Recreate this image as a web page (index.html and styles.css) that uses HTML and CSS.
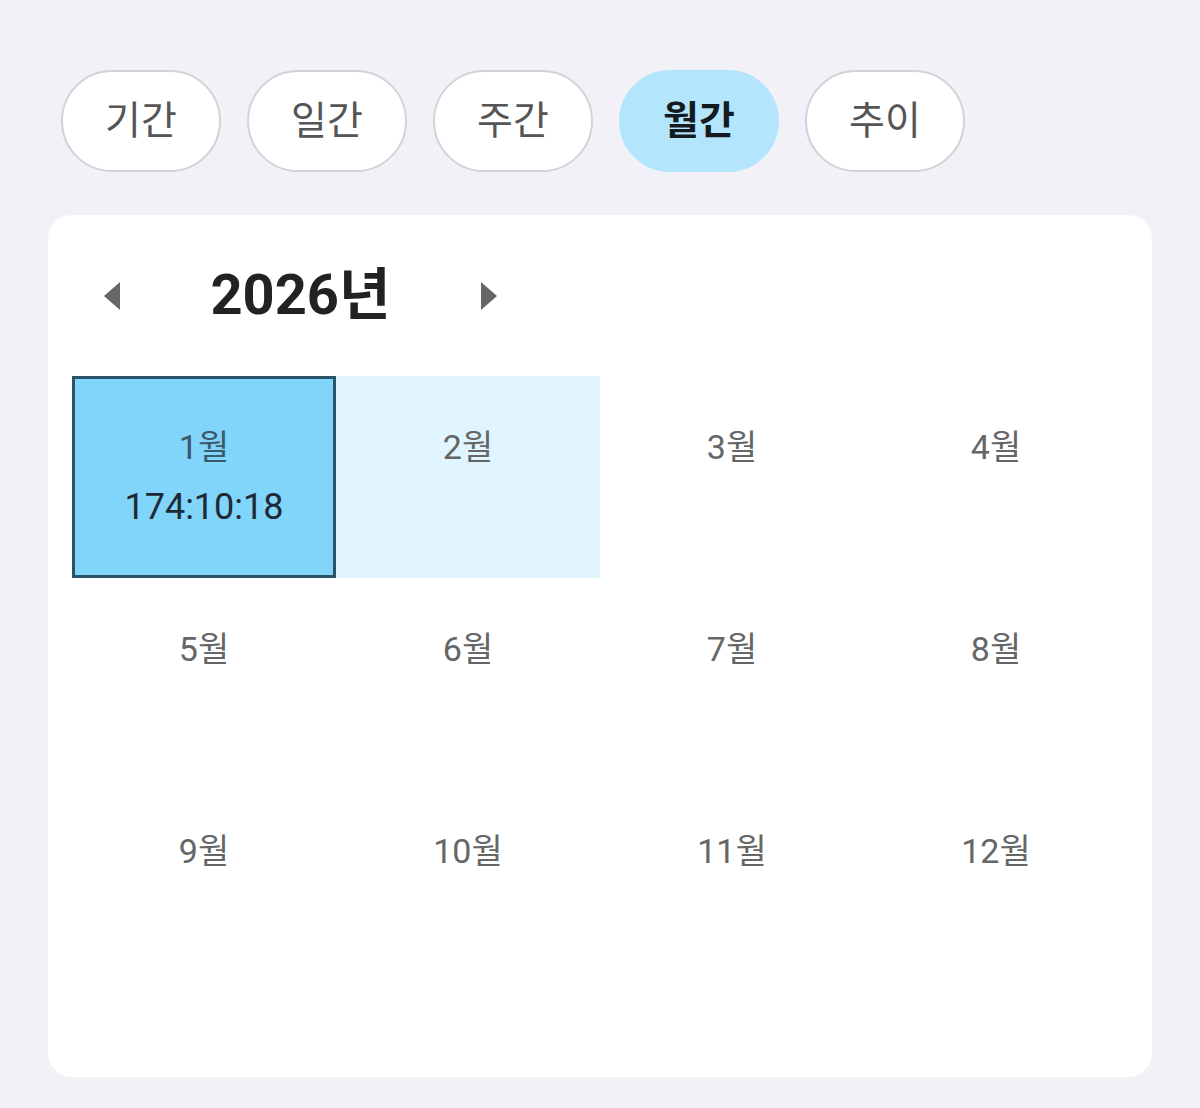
FILE: index.html
```html
<!DOCTYPE html>
<html lang="ko">
<head>
<meta charset="utf-8">
<title>월간</title>
<link rel="stylesheet" href="styles.css">
</head>
<body>
<div class="page">
  <div class="tabs">
    <button class="tab">기간</button>
    <button class="tab">일간</button>
    <button class="tab">주간</button>
    <button class="tab active">월간</button>
    <button class="tab">추이</button>
  </div>
  <div class="card">
    <div class="header">
      <button class="arrow" aria-label="이전">
        <svg width="16" height="28" viewBox="0 0 16 28"><polygon points="16,0 16,28 0,14" fill="#666"/></svg>
      </button>
      <div class="year">2026년</div>
      <button class="arrow" aria-label="다음">
        <svg width="16" height="28" viewBox="0 0 16 28"><polygon points="0,0 0,28 16,14" fill="#666"/></svg>
      </button>
    </div>
    <div class="grid">
      <div class="cell selected"><span class="m">1월</span><span class="t">174:10:18</span></div>
      <div class="cell range"><span class="m">2월</span></div>
      <div class="cell"><span class="m">3월</span></div>
      <div class="cell"><span class="m">4월</span></div>
      <div class="cell"><span class="m">5월</span></div>
      <div class="cell"><span class="m">6월</span></div>
      <div class="cell"><span class="m">7월</span></div>
      <div class="cell"><span class="m">8월</span></div>
      <div class="cell"><span class="m">9월</span></div>
      <div class="cell"><span class="m">10월</span></div>
      <div class="cell"><span class="m">11월</span></div>
      <div class="cell"><span class="m">12월</span></div>
    </div>
  </div>
</div>
</body>
</html>
```

FILE: styles.css
```css
* { box-sizing: border-box; }
html, body {
  margin: 0;
  padding: 0;
  background: #f2f1f7;
  font-family: Roboto, "Noto Sans CJK KR", sans-serif;
}
.page {
  padding: 70px 48px 0 48px;
}
.tabs {
  display: flex;
  gap: 26px;
  padding-left: 13px;
}
.tab {
  width: 160px;
  height: 102px;
  border: 2px solid #d3d2d8;
  border-radius: 51px;
  background: #fff;
  color: #555;
  font-family: "Noto Sans CJK KR", sans-serif;
  font-size: 39px;
  line-height: 1;
  padding: 0 0 8px 0;
  cursor: pointer;
}
.tab.active {
  background: #b3e5fc;
  border-color: #b3e5fc;
  color: #151a1e;
  font-weight: 700;
}
.card {
  margin-top: 43px;
  background: #fff;
  border-radius: 24px;
  padding: 24px 24px 95px 24px;
}
.header {
  height: 114px;
  display: flex;
  align-items: center;
  padding-left: 32px;
  gap: 90px;
}
.arrow {
  border: 0;
  background: none;
  padding: 0;
  width: 16px;
  height: 28px;
  display: flex;
}
.year {
  font-size: 56px;
  font-weight: 700;
  color: #222;
  width: 181px;
  text-align: center;
  white-space: nowrap;
  line-height: 1;
  padding-bottom: 2px;
}
.grid {
  margin-top: 23px;
  display: grid;
  grid-template-columns: repeat(4, 264px);
  grid-auto-rows: 202px;
}
.cell {
  display: flex;
  flex-direction: column;
  align-items: center;
  padding-top: 48px;
}
.cell .m {
  font-size: 34px;
  color: #666;
  line-height: 46px;
}
.cell .t {
  font-size: 36px;
  color: #1d2a33;
  line-height: 46px;
  margin-top: 14px;
}
.cell.selected {
  background: #81d4fa;
  border: 3px solid #2b546a;
  padding-top: 45px;
}
.cell.selected .m { color: #3c5a6c; }
.cell.range {
  background: #e1f5fe;
}
```
